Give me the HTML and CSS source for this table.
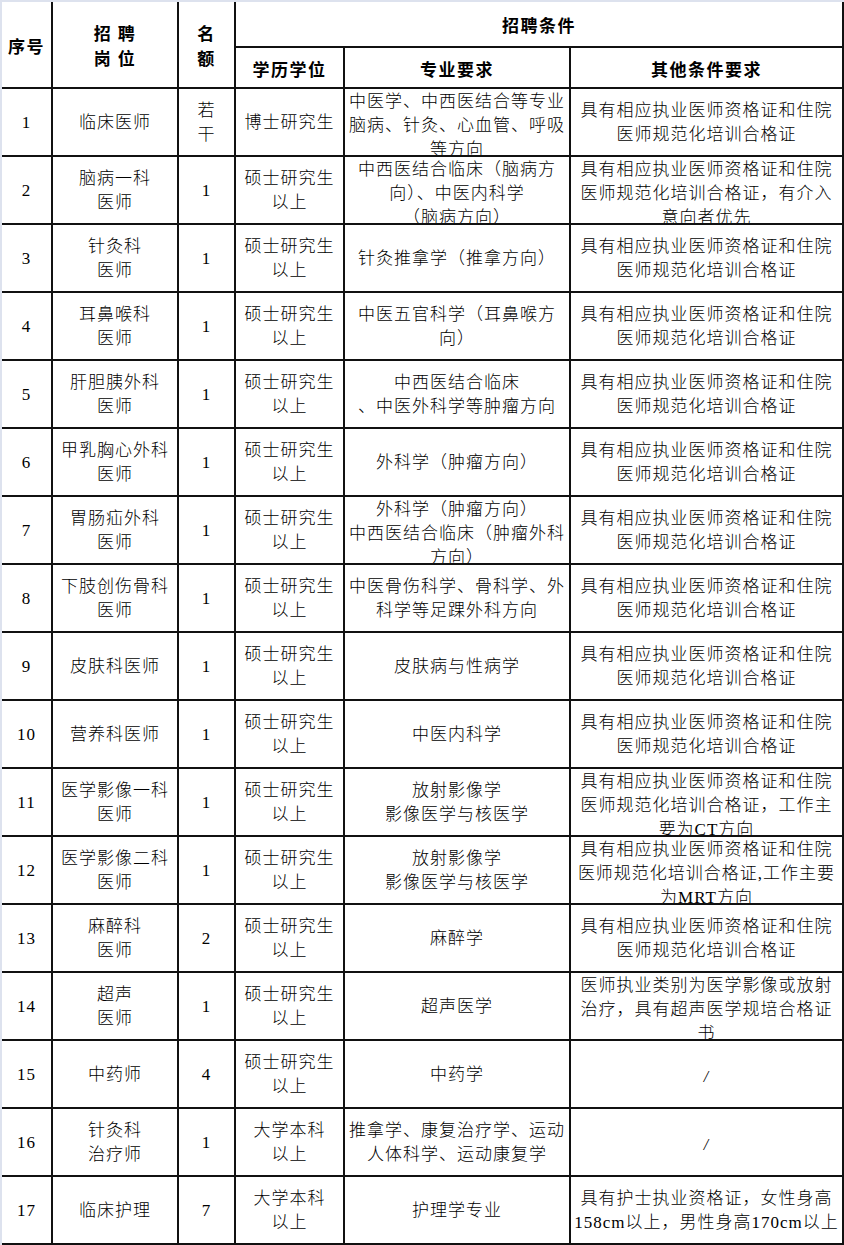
FILE: index.html
```html
<!DOCTYPE html>
<html lang="zh-CN">
<head>
<meta charset="utf-8">
<title>招聘条件</title>
<link rel="stylesheet" href="styles.css">
</head>
<body>
<div class="sheet">
  <div class="c h r2"><span>序号</span></div>
  <div class="c h r2"><span>招 聘<br>岗 位</span></div>
  <div class="c h r2"><span>名<br>额</span></div>
  <div class="c h s3"><span>招聘条件</span></div>
  <div class="c h"><span>学历学位</span></div>
  <div class="c h"><span>专业要求</span></div>
  <div class="c h"><span>其他条件要求</span></div>

  <div class="c"><span>1</span></div>
  <div class="c"><span>临床医师</span></div>
  <div class="c"><span>若<br>干</span></div>
  <div class="c"><span>博士研究生</span></div>
  <div class="c"><span>中医学、中西医结合等专业<br>脑病、针灸、心血管、呼吸<br>等方向</span></div>
  <div class="c"><span>具有相应执业医师资格证和住院<br>医师规范化培训合格证</span></div>

  <div class="c"><span>2</span></div>
  <div class="c"><span>脑病一科<br>医师</span></div>
  <div class="c"><span>1</span></div>
  <div class="c"><span>硕士研究生<br>以上</span></div>
  <div class="c"><span>中西医结合临床（脑病方<br>向）、中医内科学<br>（脑病方向）</span></div>
  <div class="c"><span>具有相应执业医师资格证和住院<br>医师规范化培训合格证，有介入<br>意向者优先</span></div>

  <div class="c"><span>3</span></div>
  <div class="c"><span>针灸科<br>医师</span></div>
  <div class="c"><span>1</span></div>
  <div class="c"><span>硕士研究生<br>以上</span></div>
  <div class="c"><span>针灸推拿学（推拿方向）</span></div>
  <div class="c"><span>具有相应执业医师资格证和住院<br>医师规范化培训合格证</span></div>

  <div class="c"><span>4</span></div>
  <div class="c"><span>耳鼻喉科<br>医师</span></div>
  <div class="c"><span>1</span></div>
  <div class="c"><span>硕士研究生<br>以上</span></div>
  <div class="c"><span>中医五官科学（耳鼻喉方<br>向）</span></div>
  <div class="c"><span>具有相应执业医师资格证和住院<br>医师规范化培训合格证</span></div>

  <div class="c"><span>5</span></div>
  <div class="c"><span>肝胆胰外科<br>医师</span></div>
  <div class="c"><span>1</span></div>
  <div class="c"><span>硕士研究生<br>以上</span></div>
  <div class="c"><span>中西医结合临床<br>、中医外科学等肿瘤方向</span></div>
  <div class="c"><span>具有相应执业医师资格证和住院<br>医师规范化培训合格证</span></div>

  <div class="c"><span>6</span></div>
  <div class="c"><span>甲乳胸心外科<br>医师</span></div>
  <div class="c"><span>1</span></div>
  <div class="c"><span>硕士研究生<br>以上</span></div>
  <div class="c"><span>外科学（肿瘤方向）</span></div>
  <div class="c"><span>具有相应执业医师资格证和住院<br>医师规范化培训合格证</span></div>

  <div class="c"><span>7</span></div>
  <div class="c"><span>胃肠疝外科<br>医师</span></div>
  <div class="c"><span>1</span></div>
  <div class="c"><span>硕士研究生<br>以上</span></div>
  <div class="c"><span>外科学（肿瘤方向）<br>中西医结合临床（肿瘤外科<br>方向）</span></div>
  <div class="c"><span>具有相应执业医师资格证和住院<br>医师规范化培训合格证</span></div>

  <div class="c"><span>8</span></div>
  <div class="c"><span>下肢创伤骨科<br>医师</span></div>
  <div class="c"><span>1</span></div>
  <div class="c"><span>硕士研究生<br>以上</span></div>
  <div class="c"><span>中医骨伤科学、骨科学、外<br>科学等足踝外科方向</span></div>
  <div class="c"><span>具有相应执业医师资格证和住院<br>医师规范化培训合格证</span></div>

  <div class="c"><span>9</span></div>
  <div class="c"><span>皮肤科医师</span></div>
  <div class="c"><span>1</span></div>
  <div class="c"><span>硕士研究生<br>以上</span></div>
  <div class="c"><span>皮肤病与性病学</span></div>
  <div class="c"><span>具有相应执业医师资格证和住院<br>医师规范化培训合格证</span></div>

  <div class="c"><span>10</span></div>
  <div class="c"><span>营养科医师</span></div>
  <div class="c"><span>1</span></div>
  <div class="c"><span>硕士研究生<br>以上</span></div>
  <div class="c"><span>中医内科学</span></div>
  <div class="c"><span>具有相应执业医师资格证和住院<br>医师规范化培训合格证</span></div>

  <div class="c"><span>11</span></div>
  <div class="c"><span>医学影像一科<br>医师</span></div>
  <div class="c"><span>1</span></div>
  <div class="c"><span>硕士研究生<br>以上</span></div>
  <div class="c"><span>放射影像学<br>影像医学与核医学</span></div>
  <div class="c"><span>具有相应执业医师资格证和住院<br>医师规范化培训合格证，工作主<br>要为CT方向</span></div>

  <div class="c"><span>12</span></div>
  <div class="c"><span>医学影像二科<br>医师</span></div>
  <div class="c"><span>1</span></div>
  <div class="c"><span>硕士研究生<br>以上</span></div>
  <div class="c"><span>放射影像学<br>影像医学与核医学</span></div>
  <div class="c"><span>具有相应执业医师资格证和住院<br>医师规范化培训合格证,工作主要<br>为MRT方向</span></div>

  <div class="c"><span>13</span></div>
  <div class="c"><span>麻醉科<br>医师</span></div>
  <div class="c"><span>2</span></div>
  <div class="c"><span>硕士研究生<br>以上</span></div>
  <div class="c"><span>麻醉学</span></div>
  <div class="c"><span>具有相应执业医师资格证和住院<br>医师规范化培训合格证</span></div>

  <div class="c"><span>14</span></div>
  <div class="c"><span>超声<br>医师</span></div>
  <div class="c"><span>1</span></div>
  <div class="c"><span>硕士研究生<br>以上</span></div>
  <div class="c"><span>超声医学</span></div>
  <div class="c"><span>医师执业类别为医学影像或放射<br>治疗，具有超声医学规培合格证<br>书</span></div>

  <div class="c"><span>15</span></div>
  <div class="c"><span>中药师</span></div>
  <div class="c"><span>4</span></div>
  <div class="c"><span>硕士研究生<br>以上</span></div>
  <div class="c"><span>中药学</span></div>
  <div class="c"><span class="slash">/</span></div>

  <div class="c"><span>16</span></div>
  <div class="c"><span>针灸科<br>治疗师</span></div>
  <div class="c"><span>1</span></div>
  <div class="c"><span>大学本科<br>以上</span></div>
  <div class="c"><span>推拿学、康复治疗学、运动<br>人体科学、运动康复学</span></div>
  <div class="c"><span class="slash">/</span></div>

  <div class="c"><span>17</span></div>
  <div class="c"><span>临床护理</span></div>
  <div class="c"><span>7</span></div>
  <div class="c"><span>大学本科<br>以上</span></div>
  <div class="c"><span>护理学专业</span></div>
  <div class="c"><span>具有护士执业资格证，女性身高<br>158cm以上，男性身高170cm以上</span></div>
</div>
</body>
</html>
```

FILE: styles.css
```css
html, body {
  margin: 0;
  padding: 0;
}

body {
  background: #dde2ee;
  width: 844px;
  height: 1245px;
  overflow: hidden;
}

.sheet {
  margin: 2px 0 0 2px;
  width: 842px;
  background: #ffffff;
  display: grid;
  grid-template-columns: 51px 126px 57px 109px 226px 273px;
  grid-template-rows: 46px 41px repeat(17, 68px);
  font-family: "Liberation Serif", "Noto Sans CJK SC", serif;
  font-size: 17px;
  font-weight: 300;
  letter-spacing: 1px;
  line-height: 24px;
  color: #000;
}

.c {
  box-sizing: border-box;
  border-right: 2px solid #111;
  border-bottom: 2px solid #111;
  display: flex;
  flex-direction: column;
  justify-content: safe center;
  align-items: center;
  padding-top: 1px;
  overflow: hidden;
  white-space: nowrap;
  text-align: center;
}

.c > span {
  display: block;
}

.h {
  font-family: "Noto Sans CJK SC", sans-serif;
  font-weight: 700;
  font-size: 17px;
  letter-spacing: 1.5px;
  line-height: 25px;
}

.r2 {
  grid-row: span 2;
}

.s3 {
  grid-column: span 3;
}

.slash {
  font-size: 16px;
  font-style: italic;
  transform: translateY(2px);
}
```
